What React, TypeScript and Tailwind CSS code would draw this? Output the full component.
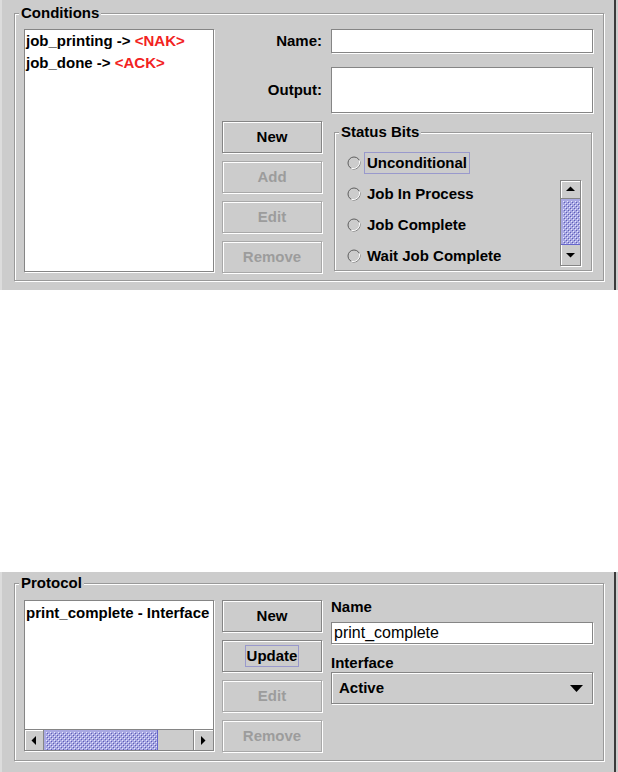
import clsx from "clsx";
import type { ReactNode } from "react";

const bevel = "border border-[#858585] shadow-[1px_1px_0_#ffffff,inset_1px_1px_0_#ffffff]";
const etched = "border border-[#999999] shadow-[1px_1px_0_#ffffff,inset_1px_1px_0_#ffffff]";

function Panel({ pad, className, children }: { pad: string; className: string; children: ReactNode }) {
  return (
    <div className={clsx("flex bg-[#cccccc]", className)}>
      <div className="w-[2px] bg-[#dcdcdc]" />
      <div className={clsx("w-[612px] pl-[12px]", pad)}>{children}</div>
      <div className="w-[2px] bg-[#3a3a3a]" />
      <div className="flex-1" />
    </div>
  );
}

function GroupBox({ title, className, children }: { title: string; className: string; children: ReactNode }) {
  return (
    <div className={clsx("relative", etched, className)}>
      <span className="absolute left-[4px] top-[-10px] bg-[#cccccc] px-[2px] text-[15px] font-bold leading-[18px]">
        {title}
      </span>
      {children}
    </div>
  );
}

function Btn({ label, disabled, focus }: { label: string; disabled?: boolean; focus?: boolean }) {
  return (
    <div
      className={clsx(
        "flex h-[32px] w-[100px] items-center justify-center bg-[#cccccc] text-[15px] font-bold",
        disabled
          ? "border border-[#a8a8a8] text-[#9c9c9c] shadow-[1px_1px_0_#ffffff,inset_1px_1px_0_#ffffff]"
          : bevel
      )}
    >
      <span className={clsx("border px-[1px] leading-[20px]", focus ? "border-[#9999cc]" : "border-transparent")}>
        {label}
      </span>
    </div>
  );
}

function Arrow({ dir }: { dir: "up" | "down" | "left" | "right" }) {
  const pts = {
    up: "0,6 9,6 4.5,1.5",
    down: "0,2 9,2 4.5,6.5",
    left: "6,0 6,9 1.5,4.5",
    right: "2,0 2,9 6.5,4.5",
  }[dir];
  return (
    <svg width="9" height="9" viewBox="0 0 9 9">
      <polygon points={pts} fill="#000000" />
    </svg>
  );
}

// metal "bumps" texture on scroll thumbs
function Bumps({ id }: { id: string }) {
  return (
    <svg className="absolute inset-0 h-full w-full">
      <defs>
        <pattern id={id} width="4" height="4" patternUnits="userSpaceOnUse">
          <rect x="0" y="0" width="1" height="1" fill="#e6e6ff" />
          <rect x="1" y="1" width="1" height="1" fill="#5c5cb8" />
          <rect x="2" y="2" width="1" height="1" fill="#e6e6ff" />
          <rect x="3" y="3" width="1" height="1" fill="#5c5cb8" />
        </pattern>
      </defs>
      <rect x="2" y="2" width="100%" height="100%" fill={`url(#${id})`} />
    </svg>
  );
}

function Radio({ label, focus }: { label: string; focus?: boolean }) {
  return (
    <div className="flex h-[31px] items-center">
      <svg width="14" height="14" viewBox="0 0 14 14">
        <circle cx="7" cy="7" r="6" fill="#cccccc" stroke="#5e5e5e" />
        <path d="M12.5 4.4 A6.6 6.6 0 0 1 4.4 12.5" stroke="#ffffff" fill="none" />
      </svg>
      <span
        className={clsx(
          "ml-[3px] border px-[2px] py-[1px] text-[15px] font-bold leading-[18px]",
          focus ? "border-[#9999cc]" : "border-transparent"
        )}
      >
        {label}
      </span>
    </div>
  );
}

function VScroll() {
  return (
    <div className={clsx("mb-[4px] mr-[10px] flex w-[21px] flex-col bg-[#cccccc]", bevel)}>
      <div className="flex h-[18px] items-center justify-center border-b border-[#858585]">
        <Arrow dir="up" />
      </div>
      <div className="relative h-[46px] overflow-hidden border-b border-[#6666cc] bg-[#a8a8e2]">
        <Bumps id="vthumb" />
      </div>
      <div className="flex h-[20px] items-center justify-center">
        <Arrow dir="down" />
      </div>
    </div>
  );
}

function HScroll() {
  return (
    <div className="flex h-[21px] border-t border-[#858585] bg-[#cccccc]">
      <div className="flex w-[19px] items-center justify-center border-r border-[#858585] shadow-[inset_1px_1px_0_#ffffff]">
        <Arrow dir="left" />
      </div>
      <div className="relative w-[114px] overflow-hidden border-r border-[#6666cc] bg-[#a8a8e2]">
        <Bumps id="hthumb" />
      </div>
      <div className="flex-1" />
      <div className="flex w-[20px] items-center justify-center border-l border-[#858585] shadow-[inset_1px_1px_0_#ffffff]">
        <Arrow dir="right" />
      </div>
    </div>
  );
}

export default function App() {
  return (
    <div className="flex w-[618px] flex-col bg-white font-['Liberation_Sans',Arial,sans-serif] text-black">
      <Panel className="h-[290px]" pad="pt-[13px]">
        <GroupBox title="Conditions" className="h-[268px] w-[590px]">
          <div className="flex gap-[8px] pl-[9px] pt-[15px]">
            <div className={clsx("h-[243px] w-[190px] bg-white pl-[1px] text-[15px] font-bold leading-[22px]", bevel)}>
              <div>
                job_printing -&gt; <span className="text-[#f22222]">&lt;NAK&gt;</span>
              </div>
              <div>
                job_done -&gt; <span className="text-[#f22222]">&lt;ACK&gt;</span>
              </div>
            </div>
            <div className="flex w-[371px] flex-col">
              <div className="flex h-[24px] items-center">
                <span className="w-[100px] text-right text-[15px] font-bold">Name:</span>
                <div className={clsx("ml-[9px] h-[24px] w-[262px] bg-white", bevel)} />
              </div>
              <div className="mt-[14px] flex h-[46px] items-center">
                <span className="w-[100px] text-right text-[15px] font-bold">Output:</span>
                <div className={clsx("ml-[9px] h-[46px] w-[262px] bg-white", bevel)} />
              </div>
              <div className="mt-[8px] flex">
                <div className="flex flex-col gap-[8px]">
                  <Btn label="New" />
                  <Btn label="Add" disabled />
                  <Btn label="Edit" disabled />
                  <Btn label="Remove" disabled />
                </div>
                <div className={clsx("relative ml-[12px] mt-[11px] h-[139px] w-[258px]", etched)}>
                  <span className="absolute left-[4px] top-[-10px] bg-[#cccccc] px-[2px] text-[15px] font-bold leading-[18px]">
                    Status Bits
                  </span>
                  <div className="flex h-full items-end">
                    <div className="flex flex-1 flex-col self-start pl-[12px] pt-[14px]">
                      <Radio label="Unconditional" focus />
                      <Radio label="Job In Process" />
                      <Radio label="Job Complete" />
                      <Radio label="Wait Job Complete" />
                    </div>
                    <VScroll />
                  </div>
                </div>
              </div>
            </div>
          </div>
        </GroupBox>
      </Panel>
      <div className="h-[282px]" />
      <Panel className="h-[200px]" pad="pt-[11px]">
        <GroupBox title="Protocol" className="h-[178px] w-[590px]">
          <div className="flex pl-[9px] pt-[16px]">
            <div className={clsx("flex h-[151px] w-[190px] flex-col overflow-hidden bg-white", bevel)}>
              <div className="flex-1 whitespace-nowrap pl-[1px] text-[15px] font-bold leading-[24px]">
                print_complete - Interface
              </div>
              <HScroll />
            </div>
            <div className="ml-[8px] flex flex-col gap-[8px]">
              <Btn label="New" />
              <Btn label="Update" focus />
              <Btn label="Edit" disabled />
              <Btn label="Remove" disabled />
            </div>
            <div className="ml-[9px] flex w-[262px] flex-col">
              <span className="text-[15px] font-bold leading-[14px]">Name</span>
              <div className={clsx("mt-[8px] flex h-[22px] items-center bg-white pl-[2px] text-[16px]", bevel)}>
                print_complete
              </div>
              <span className="mt-[12px] text-[15px] font-bold leading-[14px]">Interface</span>
              <div className={clsx("mt-[2px] flex h-[32px] items-center justify-between bg-[#cccccc] pl-[7px] pr-[9px] text-[15px] font-bold", bevel)}>
                <span>Active</span>
                <svg width="13" height="7" viewBox="0 0 13 7">
                  <polygon points="0,0 13,0 6.5,7" fill="#000000" />
                </svg>
              </div>
            </div>
          </div>
        </GroupBox>
      </Panel>
    </div>
  );
}
